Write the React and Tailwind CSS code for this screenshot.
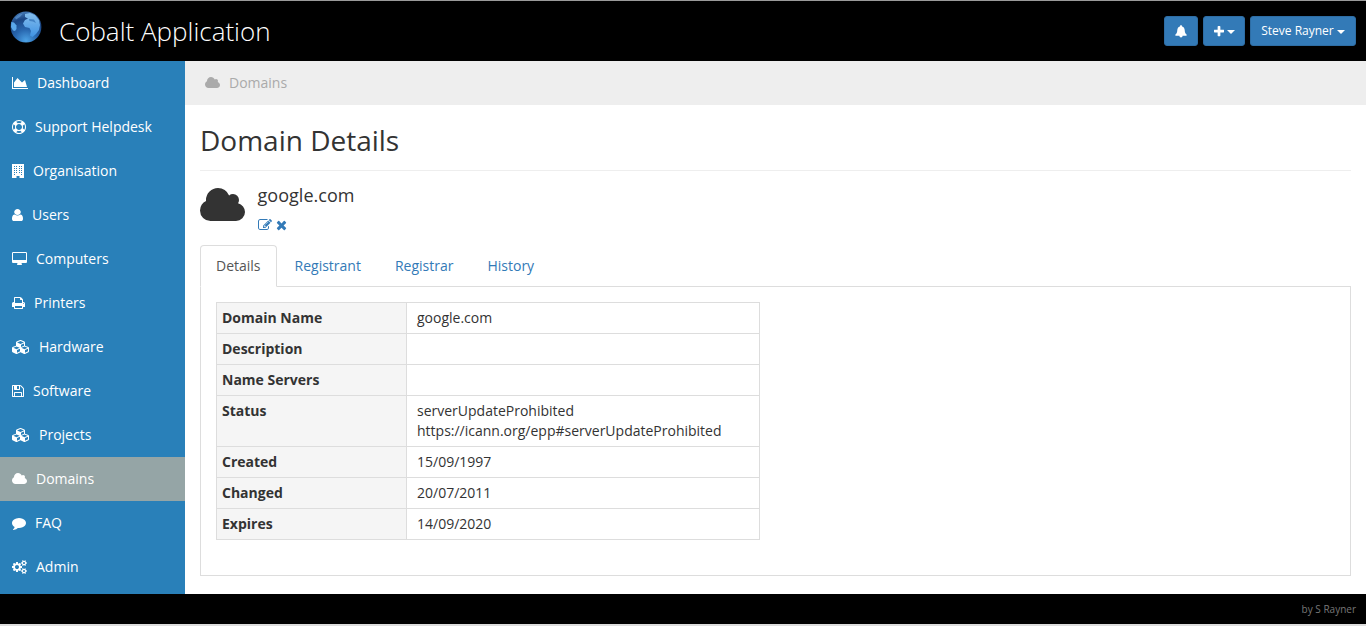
const ICONS = {
  area: ["0 0 2048 1792", "M2048 1536v128h-2048v-1536h128v1408h1920zM1664 512l256 896h-1664v-576l448-576 576 576z"],
  ring: ["0 0 1792 1792", "M896 0q182 0 348 71t286 191 191 286 71 348-71 348-191 286-286 191-348 71-348-71-286-191-191-286-71-348 71-348 191-286 286-191 348-71zm0 128q-190 0-361 90l194 194q82-28 167-28t167 28l194-194q-171-90-361-90zm-678 1129l194-194q-28-82-28-167t28-167l-194-194q-90 171-90 361t90 361zm678 407q190 0 361-90l-194-194q-82 28-167 28t-167-28l-194 194q171 90 361 90zm0-384q159 0 271.5-112.5t112.5-271.5-112.5-271.5-271.5-112.5-271.5 112.5-112.5 271.5 112.5 271.5 271.5 112.5zm484-217l194 194q90-171 90-361t-90-361l-194 194q28 82 28 167t-28 167z"],
  user: ["256 0 1280 1792", "M1536 1399q0 109-62.5 187t-150.5 78h-854q-88 0-150.5-78t-62.5-187q0-85 8.5-160.5t31.5-152 58.5-131 94-89 134.5-34.5q131 128 313 128t313-128q76 0 134.5 34.5t94 89 58.5 131 31.5 152 8.5 160.5zm-256-887q0 159-112.5 271.5t-271.5 112.5-271.5-112.5-112.5-271.5 112.5-271.5 271.5-112.5 271.5 112.5 112.5 271.5z"],
  desktop: ["-64 0 1920 1792", "M1728 992v-832q0-13-9.5-22.5t-22.5-9.5h-1600q-13 0-22.5 9.5t-9.5 22.5v832q0 13 9.5 22.5t22.5 9.5h1600q13 0 22.5-9.5t9.5-22.5zm128-832v1088q0 66-47 113t-113 47h-544q0 37 16 77.5t32 71 16 43.5q0 26-19 45t-45 19h-512q-26 0-45-19t-19-45q0-14 16-44t32-70 16-78h-544q-66 0-113-47t-47-113v-1088q0-66 47-113t113-47h1600q66 0 113 47t47 113z"],
  print: ["64 0 1664 1792", "M448 1536h896v-256h-896v256zm0-640h896v-384h-160q-40 0-68-28t-28-68v-160h-640v640zm1152 64q0-26-19-45t-45-19-45 19-19 45 19 45 45 19 45-19 19-45zm128 0v416q0 13-9.5 22.5t-22.5 9.5h-224v160q0 40-28 68t-68 28h-960q-40 0-68-28t-28-68v-160h-224q-13 0-22.5-9.5t-9.5-22.5v-416q0-79 56.5-135.5t135.5-56.5h64v-544q0-40 28-68t68-28h672q40 0 88 20t76 48l152 152q28 28 48 76t20 88v256h64q79 0 135.5 56.5t56.5 135.5z"],
  cubes: ["0 0 2304 1792", "M640 1632l384-192v-314l-384 164v342zm-64-454l404-173-404-173-404 173zm1088 454l384-192v-314l-384 164v342zm-64-454l404-173-404-173-404 173zm-448-293l384-165v-266l-384 164v267zm-64-379l441-189-441-189-441 189zm1088 518v416q0 36-19 67t-52 47l-448 224q-25 14-57 14t-57-14l-448-224q-4-2-7-4-2 2-7 4l-448 224q-25 14-57 14t-57-14l-448-224q-33-16-52-47t-19-67v-416q0-38 21.5-70t56.5-48l434-186v-400q0-38 21.5-70t56.5-48l448-192q23-10 50-10t50 10l448 192q35 16 56.5 48t21.5 70v400l434 186q36 16 57 48t21 70z"],
  floppy: ["128 0 1536 1792", "M512 1536h768v-384h-768v384zm896 0h128v-896q0-14-10-38.5t-20-34.5l-281-281q-10-10-34-20t-39-10v416q0 40-28 68t-68 28h-576q-40 0-68-28t-28-68v-416h-128v1280h128v-416q0-40 28-68t68-28h832q40 0 68 28t28 68v416zm-384-928v-320q0-13-9.5-22.5t-22.5-9.5h-192q-13 0-22.5 9.5t-9.5 22.5v320q0 13 9.5 22.5t22.5 9.5h192q13 0 22.5-9.5t9.5-22.5zm640 32v928q0 40-28 68t-68 28h-1344q-40 0-68-28t-28-68v-1344q0-40 28-68t68-28h928q40 0 88 20t76 48l280 280q28 28 48 76t20 88z"],
  cloud: ["-64 0 1920 1792", "M1856 1152q0 159-112.5 271.5t-271.5 112.5h-1088q-185 0-316.5-131.5t-131.5-316.5q0-132 71-241.5t187-163.5q-2-28-2-43 0-212 150-362t362-150q158 0 286.5 88t187.5 230q70-62 166-62 106 0 181 75t75 181q0 75-41 138 129 30 213 134.5t84 239.5z"],
  comment: ["0 0 1792 1792", "M1792 896q0 174-120 321.5t-326 233-450 85.5q-70 0-145-8-198 175-460 242-49 14-114 22-17 2-30.5-9t-17.5-29v-1q-3-4-.5-12t2-10 4.5-9.5l6-9 7-8.5 8-9q7-8 31-34.5t34.5-38 31-39.5 32.5-51 27-59 26-76q-157-89-247.5-220t-90.5-281q0-130 71-248.5t191-204.5 286-136.5 348-50.5q244 0 450 85.5t326 233 120 321.5z"],
  cogs: ["0 0 1920 1792", "M896 896q0-106-75-181t-181-75-181 75-75 181 75 181 181 75 181-75 75-181zm768 512q0-52-38-90t-90-38-90 38-38 90q0 53 37.5 90.5t90.5 37.5 90.5-37.5 37.5-90.5zm0-1024q0-52-38-90t-90-38-90 38-38 90q0 53 37.5 90.5t90.5 37.5 90.5-37.5 37.5-90.5zm-384 421v185q0 10-7 19.5t-16 10.5l-155 24q-11 35-32 76 34 48 90 115 7 11 7 20 0 12-7 19-23 30-82.5 89.5t-78.5 59.5q-11 0-21-7l-115-90q-37 19-77 31-11 108-23 155-7 24-30 24h-186q-11 0-20-7.5t-10-17.5l-23-153q-34-10-75-31l-118 89q-7 7-20 7-11 0-21-8-144-133-144-160 0-9 7-19 10-14 41-53t47-61q-23-44-35-82l-152-24q-10-1-17-9.5t-7-19.5v-185q0-10 7-19.5t16-10.5l155-24q11-35 32-76-34-48-90-115-7-11-7-20 0-12 7-20 22-30 82-89t79-59q11 0 21 7l115 90q34-18 77-32 11-108 23-154 7-24 30-24h186q11 0 20 7.5t10 17.5l23 153q34 10 75 31l118-89q8-7 20-7 11 0 21 8 144 133 144 160 0 8-7 19-12 16-42 54t-45 60q23 48 34 82l152 23q10 2 17 10.5t7 19.5zm640 533v140q0 16-149 31-12 27-30 52 51 113 51 138 0 4-4 7-122 71-124 71-8 0-46-47t-52-68q-20 2-30 2t-30-2q-14 21-52 68t-46 47q-2 0-124-71-4-3-4-7 0-25 51-138-18-25-30-52-149-15-149-31v-140q0-16 149-31 13-29 30-52-51-113-51-138 0-4 4-7 4-2 35-20t59-34 30-16q8 0 46 46.5t52 67.5q20-2 30-2t30 2q51-71 92-112l6-2q4 0 124 70 4 3 4 7 0 25-51 138 17 23 30 52 149 15 149 31zm0-1024v140q0 16-149 31-12 27-30 52 51 113 51 138 0 4-4 7-122 71-124 71-8 0-46-47t-52-68q-20 2-30 2t-30-2q-14 21-52 68t-46 47q-2 0-124-71-4-3-4-7 0-25 51-138-18-25-30-52-149-15-149-31v-140q0-16 149-31 13-29 30-52-51-113-51-138 0-4 4-7 4-2 35-20t59-34 30-16q8 0 46 46.5t52 67.5q20-2 30-2t30 2q51-71 92-112l6-2q4 0 124 70 4 3 4 7 0 25-51 138 17 23 30 52 149 15 149 31z"],
  pencil: ["0 0 1792 1792", "M888 1184l116-116-152-152-116 116v56h96v96h56zm440-720q-16-16-33 1l-350 350q-17 17-1 33t33-1l350-350q17-17 1-33zm80 594v190q0 119-84.5 203.5t-203.5 84.5h-832q-119 0-203.5-84.5t-84.5-203.5v-832q0-119 84.5-203.5t203.5-84.5h832q63 0 117 25 15 7 18 23 3 17-9 29l-49 49q-14 14-32 8-23-6-45-6h-832q-66 0-113 47t-47 113v832q0 66 47 113t113 47h832q66 0 113-47t47-113v-126q0-13 9-22l64-64q15-15 35-7t20 29zm-96-738l288 288-672 672h-288v-288zm444 132l-92 92-288-288 92-92q28-28 68-28t68 28l152 152q28 28 28 68t-28 68z"],
  times: ["192 0 1408 1792", "M1490 1322q0 40-28 68l-136 136q-28 28-68 28t-68-28l-294-294-294 294q-28 28-68 28t-68-28l-136-136q-28-28-28-68t28-68l294-294-294-294q-28-28-28-68t28-68l136-136q28-28 68-28t68 28l294 294 294-294q28-28 68-28t68 28l136 136q28 28 28 68t-28 68l-294 294 294 294q28 28 28 68z"],
  plus: ["192 0 1408 1792", "M1600 736v192q0 40-28 68t-68 28h-416v416q0 40-28 68t-68 28h-192q-40 0-68-28t-28-68v-416h-416q-40 0-68-28t-28-68v-192q0-40 28-68t68-28h416v-416q0-40 28-68t68-28h192q40 0 68 28t28 68v416h416q40 0 68 28t28 68z"],
  building: ["0 0 12 14", "M0 0h12v14h-4.500v-2h-3v2h-4.500zM2 2v1h1v-1zM4 2v1h1v-1zM7 2v1h1v-1zM9 2v1h1v-1zM2 4v1h1v-1zM4 4v1h1v-1zM7 4v1h1v-1zM9 4v1h1v-1zM2 6v1h1v-1zM4 6v1h1v-1zM7 6v1h1v-1zM9 6v1h1v-1zM2 8v1h1v-1zM4 8v1h1v-1zM7 8v1h1v-1zM9 8v1h1v-1zM2 10v1h1v-1zM9 10v1h1v-1z"],
  bell: ["0 0 12 13", "M6 .3C6.700 .3 7.100 .7 7.100 1.400C8.800 1.900 9.600 3.300 9.700 5C9.800 7.300 10.300 8.300 11.600 9.600V10.800H7.600C7.500 12 6.900 12.500 6 12.500S4.500 12 4.400 10.800H.4V9.600C1.700 8.300 2.200 7.300 2.300 5C2.400 3.300 3.200 1.900 4.900 1.400C4.900 .7 5.300 .3 6 .3z"],
};

function Icon({ name, className }) {
  const [viewBox, d] = ICONS[name];
  return (
    <svg viewBox={viewBox} preserveAspectRatio="none" fill="currentColor" fillRule={name === "building" ? "evenodd" : "nonzero"} className={`block shrink-0 ${className}`} aria-hidden="true">
      <path d={d} />
    </svg>
  );
}

const NAV = [
  ["area", "Dashboard", "w-4"],
  ["ring", "Support Helpdesk", "w-[14px]"],
  ["building", "Organisation", "w-[12px]"],
  ["user", "Users", "w-[11px]"],
  ["desktop", "Computers", "w-[15px]"],
  ["print", "Printers", "w-[13px]"],
  ["cubes", "Hardware", "w-[18px]"],
  ["floppy", "Software", "w-[12px]"],
  ["cubes", "Projects", "w-[18px]"],
  ["cloud", "Domains", "w-[15px]"],
  ["comment", "FAQ", "w-[14px]"],
  ["cogs", "Admin", "w-[15px]"],
];

const ROWS = [
  ["Domain Name", ["google.com"]],
  ["Description", []],
  ["Name Servers", []],
  ["Status", ["serverUpdateProhibited", "https://icann.org/epp#serverUpdateProhibited"]],
  ["Created", ["15/09/1997"]],
  ["Changed", ["20/07/2011"]],
  ["Expires", ["14/09/2020"]],
];

function Globe() {
  return (
    <svg viewBox="0 0 32 32" className="block size-8 shrink-0" aria-hidden="true">
      <defs>
        <radialGradient id="sea" cx=".5" cy=".95" r=".95">
          <stop offset="0" stopColor="#4da3e6" />
          <stop offset=".4" stopColor="#2765ad" />
          <stop offset=".75" stopColor="#1b4684" />
          <stop offset="1" stopColor="#4579b5" />
        </radialGradient>
        <linearGradient id="land" x1="0" y1="0" x2="0" y2="1">
          <stop offset="0" stopColor="#84bdec" />
          <stop offset="1" stopColor="#3f93e4" />
        </linearGradient>
      </defs>
      <circle cx="16" cy="16" r="15.400" fill="url(#sea)" />
      <path d="M15 3L20 2L25 4L29 9L30 14L29 19L26 23L22.500 26L20 24.500L21 20L19.500 17L15 16L13 12.500L15 9L18 7.500L15 6z" fill="url(#land)" />
      <path d="M19 8L24 8.500L26 12L23 10.500L19.500 10z" fill="#2765ad" opacity=".6" />
      <path d="M1.300 11L4 11.500L6.500 14.500L6.500 18L5 20L3 19.500L1 16z" fill="#5aa8ea" />
      <path d="M5 6.500L9 3.500L13 2.500L10 6L6 8.500z" fill="#5c94cd" opacity=".7" />
    </svg>
  );
}

function Caret({ className = "" }) {
  return <span className={`inline-block border-x-4 border-t-4 border-x-transparent border-t-white ${className}`} />;
}

export default function App() {
  return (
    <div className="flex h-[626px] w-[1366px] flex-col overflow-hidden border-t border-[#9a9a9a] bg-white font-['Open_Sans',sans-serif] text-sm leading-5 text-[#333]">
      <header className="flex h-[60px] shrink-0 items-start bg-black pl-[10px] pr-[10px]">
        <div className="pt-[10px]"><Globe /></div>
        <h1 className="ml-[17px] pt-[11px] text-[26px] font-light leading-[39px] text-white">Cobalt Application</h1>
        <div className="ml-auto flex pt-[15px] text-xs leading-[18px] text-white">
          <button className="mr-[5px] flex h-[30px] w-[34px] items-center justify-center rounded-[3px] border border-[#2e6da4] bg-[#337ab7]">
            <Icon name="bell" className="h-[13px] w-[12px]" />
          </button>
          <button className="mr-[5px] flex h-[30px] w-[42px] items-center justify-center rounded-[3px] border border-[#2e6da4] bg-[#337ab7]">
            <Icon name="plus" className="h-[13px] w-[10px]" />
            <Caret className="ml-[3px] mt-[2px]" />
          </button>
          <button className="flex h-[30px] w-[106px] items-center justify-center rounded-[3px] border border-[#2e6da4] bg-[#337ab7]">
            Steve Rayner
            <Caret className="ml-[3px] mt-[2px]" />
          </button>
        </div>
      </header>

      <div className="flex h-[533px] shrink-0">
        <nav className="w-[185px] shrink-0 bg-[#2980b9] text-white">
          {NAV.map(([icon, label, size]) => (
            <a key={label} className={`flex h-11 items-center gap-[9px] pl-3 ${label === "Domains" ? "bg-[#95a5a6]" : ""}`}>
              <Icon name={icon} className={`h-[14px] ${size}`} />
              <span>{label}</span>
            </a>
          ))}
        </nav>

        <main className="min-w-0 flex-1">
          <div className="flex h-11 items-center gap-[9px] bg-[#eee] pl-5 text-[#aaa]">
            <Icon name="cloud" className="h-[14px] w-[15px]" />
            <span>Domains</span>
          </div>
          <div className="px-[15px]">
            <h2 className="h-[66px] border-b border-[#eee] pt-[20px] text-[28px] leading-[31px]">Domain Details</h2>
            <div className="flex h-[74px] pt-[12px]">
              <Icon name="cloud" className="mt-[2px] h-[42px] w-[45px]" />
              <div className="ml-[12.500px]">
                <h3 className="pt-[2px] text-lg leading-5 tracking-[0.03px]">google.com</h3>
                <div className="mt-[13px] flex gap-[4px] text-[#337ab7]">
                  <Icon name="pencil" className="h-[14px] w-[14px]" />
                  <Icon name="times" className="h-[14px] w-[11px]" />
                </div>
              </div>
            </div>
            <div className="flex h-[42px] border-b border-[#ddd] text-[#337ab7]">
              <a className="h-[42px] rounded-t border border-b-white border-[#ddd] bg-white px-[15px] py-[10px] text-[#555]">Details</a>
              <a className="ml-[2px] px-4 py-[11px]">Registrant</a>
              <a className="ml-[2px] px-4 py-[11px]">Registrar</a>
              <a className="ml-[2px] px-4 py-[11px]">History</a>
            </div>
            <div className="h-[289px] border border-t-0 border-[#ddd] p-[15px]">
              <table className="w-[544px] table-fixed border-collapse">
                <tbody>
                  {ROWS.map(([label, lines]) => (
                    <tr key={label} className="align-top">
                      <th className="w-[190px] border border-[#ddd] bg-[#f5f5f5] p-[5px] text-left font-bold">{label}</th>
                      <td className="border border-[#ddd] py-[5px] pl-[10px]">
                        {lines.map((line) => <div key={line}>{line}</div>)}
                      </td>
                    </tr>
                  ))}
                </tbody>
              </table>
            </div>
          </div>
        </main>
      </div>

      <footer className="h-[30px] shrink-0 bg-black pr-[10px] text-right text-[10px] leading-[30px] text-[#777]">by S Rayner</footer>
      <div className="h-[2px] shrink-0 bg-[#ddd]" />
    </div>
  );
}
